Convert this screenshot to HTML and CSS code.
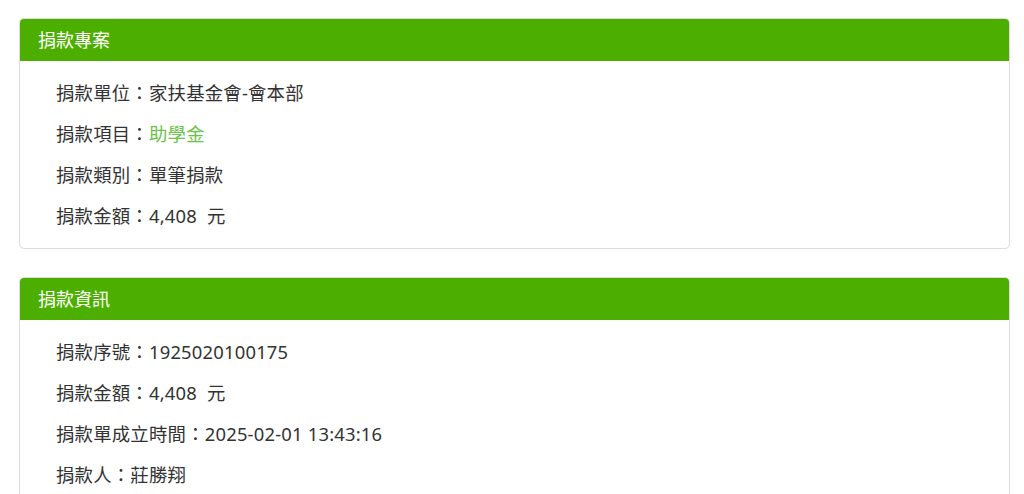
FILE: index.html
```html
<!DOCTYPE html>
<html lang="zh-Hant">
  <head>
    <meta charset="utf-8">
    <title>捐款明細</title>
    <link rel="stylesheet" href="styles.css">
  </head>
  <body>
    <div class="panel">
      <div class="panel-heading">捐款專案</div>
      <div class="panel-body">
        <p class="row">捐款單位：家扶基金會-會本部</p>
        <p class="row">捐款項目：<span class="project">助學金</span></p>
        <p class="row">捐款類別：單筆捐款</p>
        <p class="row">捐款金額：4,408&nbsp; 元</p>
      </div>
    </div>

    <div class="panel">
      <div class="panel-heading">捐款資訊</div>
      <div class="panel-body">
        <p class="row">捐款序號：1925020100175</p>
        <p class="row">捐款金額：4,408&nbsp; 元</p>
        <p class="row">捐款單成立時間：2025-02-01 13:43:16</p>
        <p class="row">捐款人：莊勝翔</p>
      </div>
    </div>
  </body>
</html>
```

FILE: styles.css
```css
body {
	margin: 0;
	padding: 18px 14px 0 19px;
	font-family: "Noto Sans", "Noto Sans CJK TC", sans-serif;
	background: #fff;
	color: #333;
	text-spacing-trim: space-all;
}

.panel {
	border: 1px solid #ddd;
	border-radius: 5px;
	margin-bottom: 28px;
	overflow: hidden;
}

.panel-heading {
	background: #4caf00;
	color: #fff;
	font-size: 18px;
	height: 42px;
	line-height: 42px;
	padding: 0 18px;
}

.panel-body { padding: 11px 36px 12px 36px; }

.row {
	margin: 0;
	font-size: 18.4px;
	line-height: 41px;
	letter-spacing: 0.2px;
}

.project { color: #6cc24a; }
```
